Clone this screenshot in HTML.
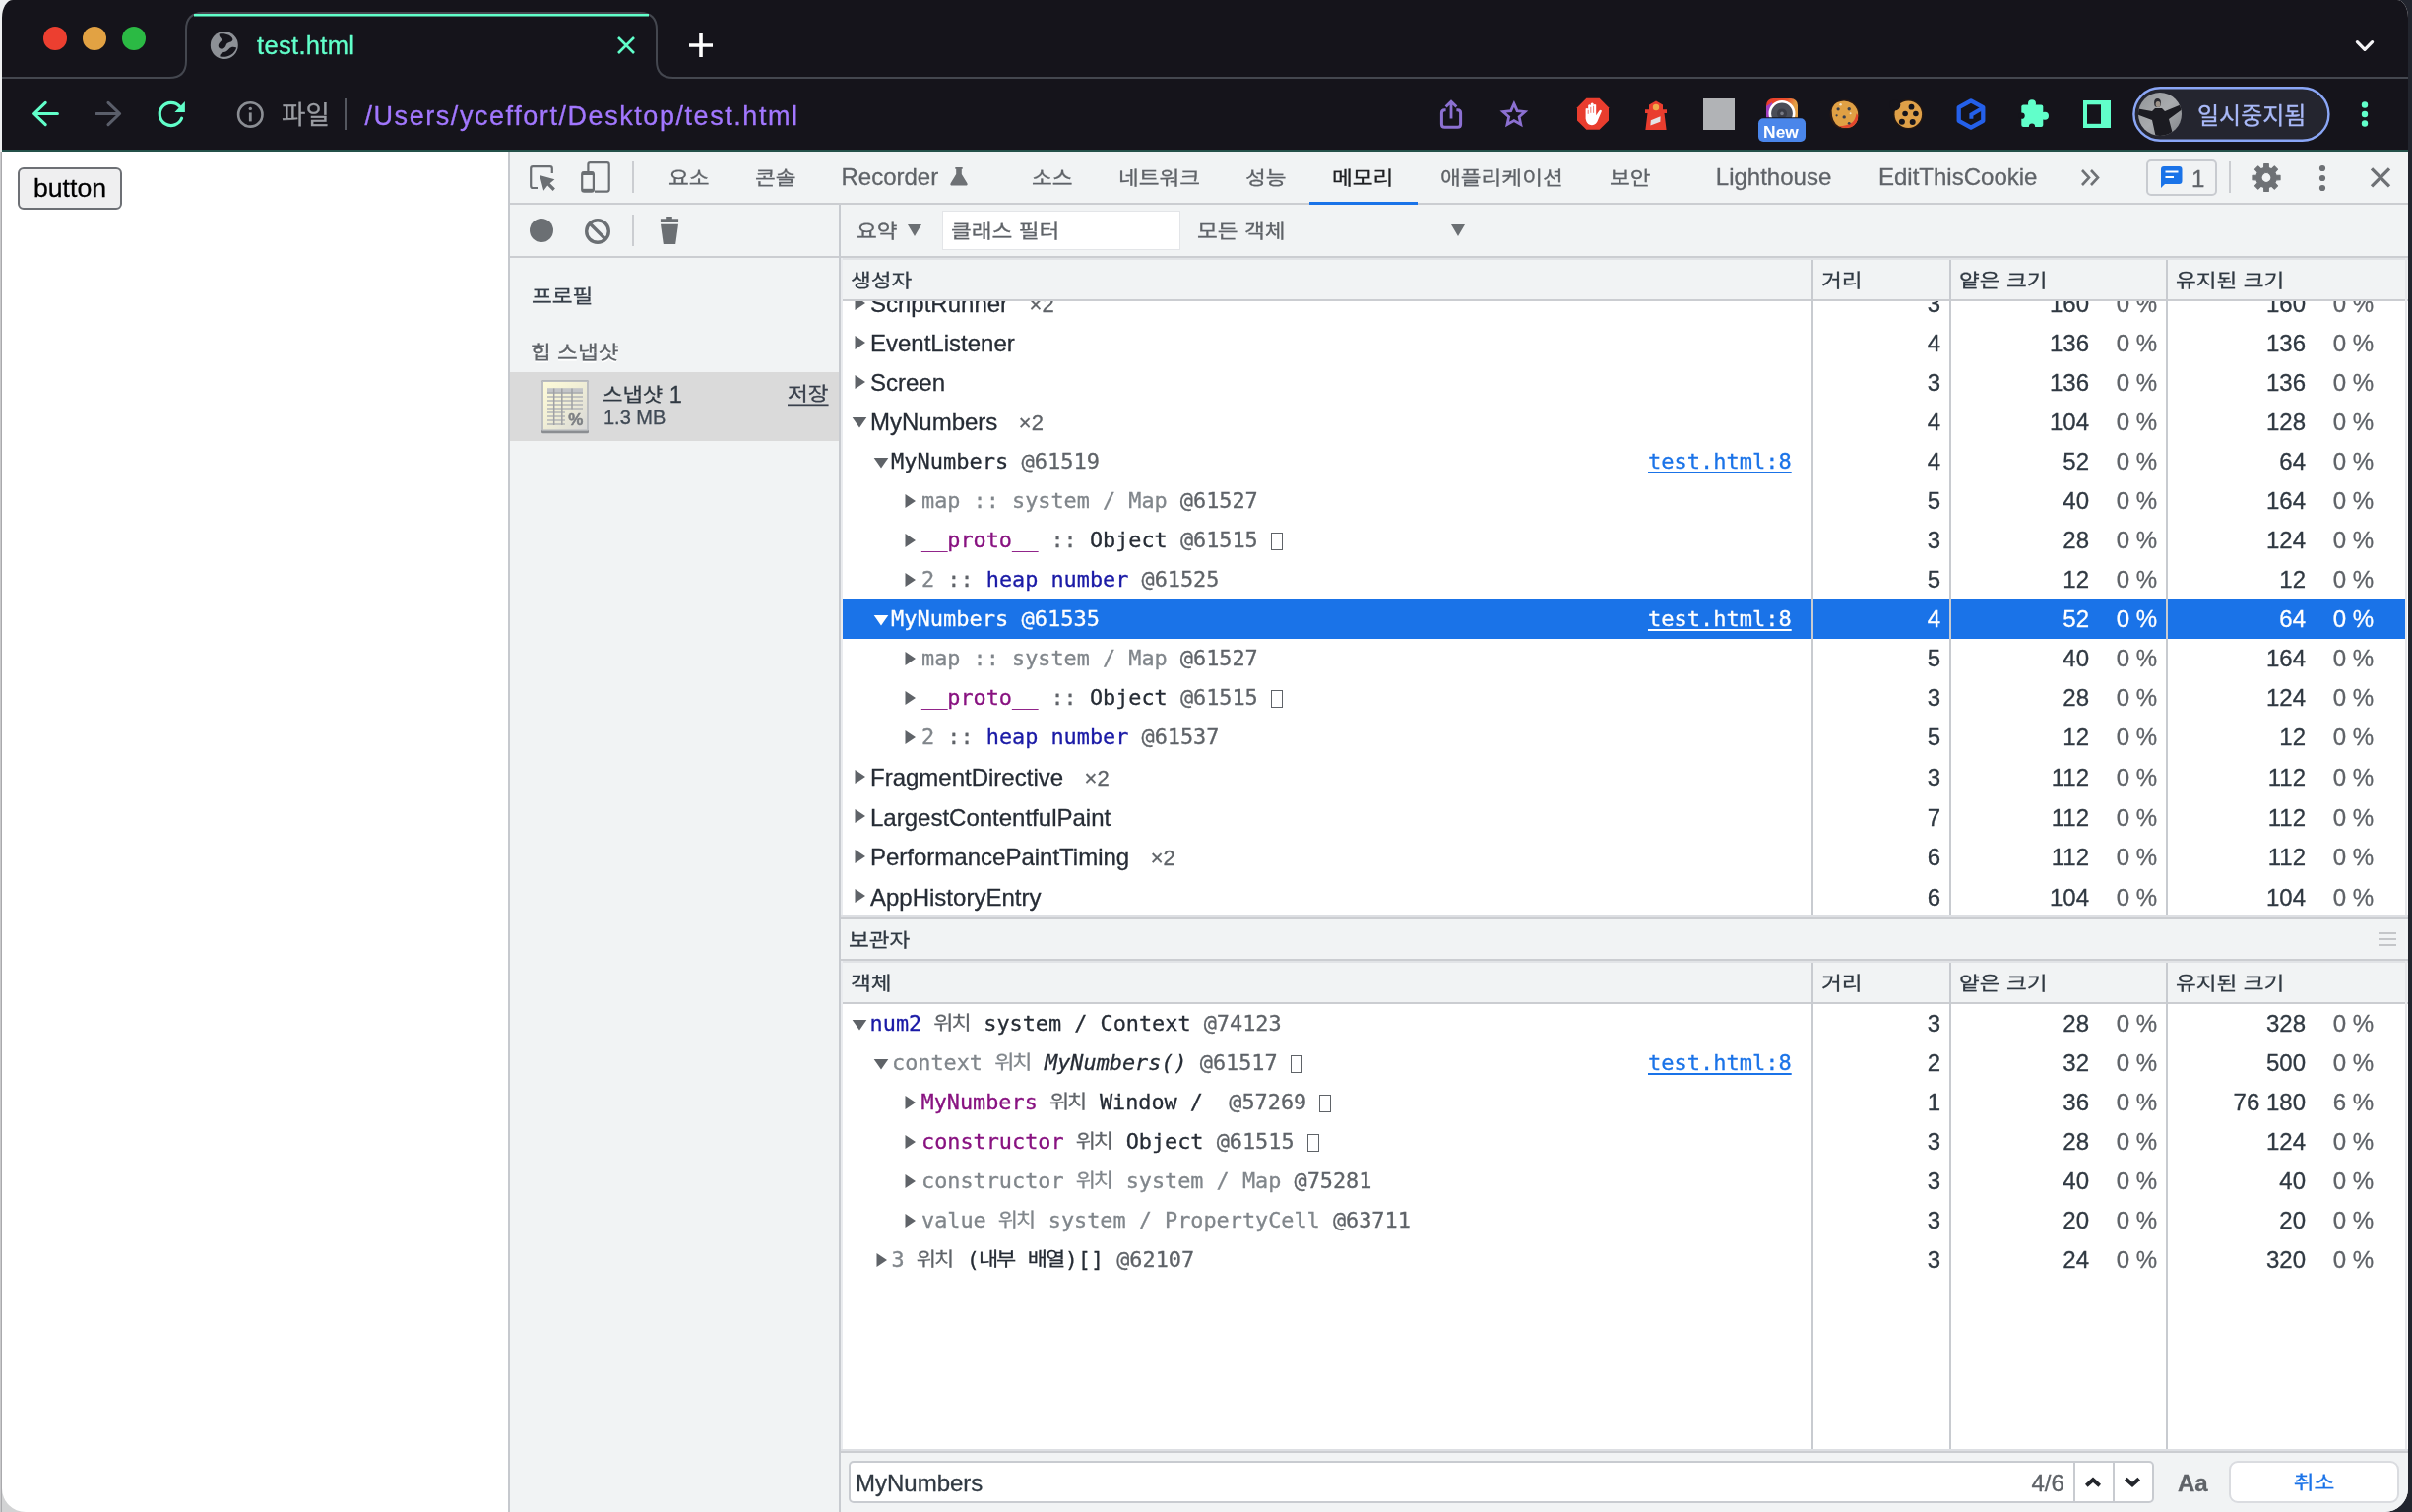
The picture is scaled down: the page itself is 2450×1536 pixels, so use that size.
<!DOCTYPE html>
<html lang="ko"><head><meta charset="utf-8"><title>test.html</title>
<style>
html,body{margin:0;padding:0}
body{width:2450px;height:1536px;position:relative;overflow:hidden;background:linear-gradient(to right,#c9c9cb 0,#c9c9cb 1px,#a9a9ac 1px,#a9a9ac 2px,#d2d3d4 2px,#d2d3d4 1200px,#22252e 1200px);font-family:"Liberation Sans","Noto Sans CJK KR",sans-serif;color:#303942;-webkit-font-smoothing:antialiased;-webkit-text-stroke:.3px}
*{box-sizing:border-box}
.abs{position:absolute}
#win{position:absolute;left:2px;top:0;width:2444px;height:1536px;border-radius:11px 11px 24px 24px / 18px 18px 24px 24px;overflow:hidden;background:#fff}
#chrome{position:absolute;left:0;top:0;width:2450px;height:152px;background:#15141b}
#tealline{position:absolute;left:0;top:152px;width:2450px;height:2px;background:#24514a}
.kr{font-family:"Noto Sans CJK KR","Liberation Sans",sans-serif}
.mono{font-family:"DejaVu Sans Mono","Liberation Mono","Noto Sans CJK KR",monospace}
svg{position:absolute;overflow:visible}
.t{position:absolute;white-space:pre;line-height:1}
/* devtools */
#dt{position:absolute;left:516px;top:154px;width:1930px;height:1382px;background:#f1f3f4}
.hl{position:absolute;height:2px;background:#cbcdd1}
.vl{position:absolute;width:2px;background:#cbcdd1}
.tab{position:absolute;top:154px;height:52px;line-height:52px;font-size:24px;color:#5f6368;white-space:pre}
.tab.kr{font-size:22.6px;transform:scaleY(.88)}
.sq{transform:scaleY(.88)}
.sqi{display:inline-block;transform:scaleY(.88)}
.row{position:absolute;left:856px;width:1588px;height:40px;line-height:40px;font-size:24px;white-space:pre}
.row .c{position:absolute;top:0;height:40px}
.row .num{position:absolute;top:0;text-align:right;width:200px;color:#303942}
.row .pct{position:absolute;top:0;text-align:right;width:100px;color:#5f6368}
.row .m{font-family:"DejaVu Sans Mono","Liberation Mono",monospace;font-size:21.84px;position:absolute;top:0}
.row .s{position:absolute;top:0}
.row .k{font-family:"Noto Sans CJK KR",sans-serif;font-size:22px;letter-spacing:-2.1px;margin-left:-1px;margin-right:1.5px;line-height:0;display:inline-block;transform:scaleY(.87)}
.row a{color:#1a73e8;text-decoration:underline;text-decoration-thickness:2px;text-underline-offset:3px}
.sel{background:#1a73e8}
.sel, .sel .num, .sel .pct, .sel a, .sel span{color:#fff !important}
.g{color:#80868b}.d{color:#5f6368}.b{color:#262c35}.p{color:#881280}.n{color:#1a1aa6}
.tofu{display:inline-block;width:12px;height:18px;border:1.6px solid #5f6368;vertical-align:-3px}
.hdr{position:absolute;transform:scaleY(.88);font-size:22.6px;line-height:40px;height:40px;color:#303942;font-family:"Noto Sans CJK KR",sans-serif;white-space:pre}
</style></head>
<body>
<div class="abs" style="left:0;top:0;width:40px;height:154px;background:#eeeff0"></div>
<div id="win">
<div class="abs" id="pg" style="left:-2px;top:0;width:2450px;height:1536px;will-change:transform">
<div id="chrome"></div><div id="tealline"></div>
<svg width="2450" height="156" style="left:0;top:0" viewBox="0 0 2450 156">
<path d="M0,79 H172 Q189,79 189,62 V30 Q189,13 206,13 H650 Q667,13 667,30 V62 Q667,79 684,79 H2450" fill="none" stroke="#44474f" stroke-width="2"/>
<path d="M197,15.3 H659" stroke="#61ffca" stroke-width="2.6" fill="none"/>
<circle cx="56" cy="39" r="12" fill="#ec3f30"/><circle cx="96" cy="39" r="12" fill="#e2a243"/><circle cx="136" cy="39" r="12" fill="#2bba44"/>
<g transform="translate(227.8,46)"><circle r="14" fill="#8d9096"/><path d="M-5,-11.5 C1,-12.5 8,-10 8.6,-6 C8.8,-2.6 3,-3.6 2,-0.6 C1.2,2.4 -1.6,4.6 -4.4,3.2 C-7.4,1.6 -5.8,-2.2 -3,-4.4 C-0.8,-6.4 -6.2,-8 -5,-11.5 Z" fill="#15141b"/><path d="M12.4,2.4 C10,9.6 3,12.8 -4.4,11.4 C-4.8,7.2 0.6,7.6 3,5.6 C5.4,3.6 6.4,0.4 12.4,2.4 Z" fill="#15141b"/></g>
<path d="M628,38 L644,54 M644,38 L628,54" stroke="#61ffca" stroke-width="2.6" fill="none"/>
<path d="M700,46 H724 M712,34 V58" stroke="#fff" stroke-width="3.6" fill="none"/>
<path d="M2394.4,42.6 L2402,50.4 L2409.6,42.6" stroke="#f4f4f6" stroke-width="3.2" fill="none" stroke-linejoin="round" stroke-linecap="round"/>
<path d="M58.4,115.5 H35.4 M46.2,104.4 L34.6,115.5 L46.2,126.6" stroke="#61ffca" stroke-width="3.1" fill="none" stroke-linecap="round" stroke-linejoin="round"/>
<path d="M97.8,115.5 H120.8 M110,104.4 L121.6,115.5 L110,126.6" stroke="#5a5e6a" stroke-width="3.1" fill="none" stroke-linecap="round" stroke-linejoin="round"/>
<g transform="translate(173.8,115.9)"><path d="M8.6,-7.8 A11.6,11.6 0 1 0 10.76,4.35" stroke="#61ffca" stroke-width="3.2" fill="none" stroke-linecap="round"/><path d="M14.1,-13 V-1.9 H3.7 Z" fill="#61ffca"/></g>
<g transform="translate(254.3,116.4)"><circle r="12.2" fill="none" stroke="#8b8e94" stroke-width="2.6"/><path d="M0,-2 V7" stroke="#8b8e94" stroke-width="2.8"/><circle cy="-6" r="1.7" fill="#8b8e94"/></g>
<path d="M351,100 V132" stroke="#54575f" stroke-width="2"/>
<g stroke="#8c70d2" stroke-width="3" fill="none"><path d="M1468.6,111.8 H1467.4 Q1464.4,111.8 1464.4,114.8 V126.3 Q1464.4,129.3 1467.4,129.3 H1480.6 Q1483.6,129.3 1483.6,126.3 V114.8 Q1483.6,111.8 1480.6,111.8 H1479.4"/><path d="M1474,120.6 V103.5 M1468.6,108.6 L1474,103.2 L1479.4,108.6" stroke-width="2.8"/></g>
<path d="M1537.90,105.40 L1541.13,112.65 L1549.03,113.48 L1543.13,118.80 L1544.78,126.57 L1537.90,122.60 L1531.02,126.57 L1532.67,118.80 L1526.77,113.48 L1534.67,112.65 Z" fill="none" stroke="#8c70d2" stroke-width="2.8" stroke-linejoin="miter"/>
<g transform="translate(1618,115.8)"><path d="M-6.6,-16 H6.6 L16,-6.6 V6.6 L6.6,16 H-6.6 L-16,6.6 V-6.6 Z" fill="#e93d2e"/><path d="M-7.4,5 V-5.2 Q-6.1,-6.6 -4.8,-5.2 V-8.8 Q-3.5,-10.2 -2.2,-8.8 V-10.6 Q-0.8,-12.2 0.6,-10.6 V-9.2 Q1.9,-10.6 3.2,-9.2 V1.5 L6.6,-3.6 Q8,-4.6 9,-3 L5.2,6 Q3.5,11.4 -1,11.4 Q-6.2,11.4 -7.4,5 Z" fill="#fff"/><path d="M-4.8,-4 V0 M-2.2,-7 V-1 M0.6,-8 V-1" stroke="#e93d2e" stroke-width="0.7"/></g>
<g transform="translate(1682,116)" fill="#e93d2e"><path d="M0,-13.4 L7,-9.4 V-4 H-7 V-9.4 Z"/><path d="M-11,-4.8 H11 V-1 H8.5 L10.6,16 H-10.6 L-8.5,-1 H-11 Z"/><circle cy="-7" r="3.2" fill="#f0a94a"/><path d="M-5.2,6.2 L4.6,2.2 L4.4,7.8 L-5.6,11.6 Z" fill="#e4e4e6"/></g>
<rect x="1730" y="100" width="32" height="32" fill="#b1b3b6"/>
<defs><linearGradient id="ig" x1="0" y1="0" x2="1" y2="0.6"><stop offset="0" stop-color="#e8392c"/><stop offset=".5" stop-color="#e8502c"/><stop offset=".75" stop-color="#e2a046"/><stop offset="1" stop-color="#e2a046"/></linearGradient><clipPath id="cam"><rect x="1794" y="100" width="32" height="21"/></clipPath></defs><g clip-path="url(#cam)"><rect x="1794" y="100" width="32" height="32" rx="7" fill="url(#ig)"/><path d="M1794,108 L1800,104 L1802,122 H1794 Z" fill="#a13fc0"/><circle cx="1810" cy="115.4" r="12.2" fill="#4a4d57" stroke="#fff" stroke-width="2.6"/><circle cx="1810" cy="115.4" r="5" fill="#3a3c46"/><circle cx="1810" cy="115.4" r="1.8" fill="#777a85"/></g>
<rect x="1785" y="119.2" width="50" height="25.8" rx="6" fill="#15141b"/><rect x="1786" y="120.2" width="48" height="23.8" rx="5" fill="#4a86ea"/>
<text x="1809" y="140" font-family="Liberation Sans, sans-serif" font-weight="bold" font-size="17.4" fill="#fff" text-anchor="middle">New</text>
<g transform="translate(1873.6,116.3)"><circle r="15" fill="#2a1a14"/><path d="M-13,-4 Q-12,-12 -4,-13.4 Q2,-15 8,-11 Q14,-6 13.6,1 Q14,9 7,12.6 Q0,15 -6,12 Q-13,8 -13,-4 Z" fill="#e0a044"/><path d="M13.6,1 Q14,9 7,12.6 Q0,15 -6,12 Q2,12 8,8 Q11,5 12,-1 Z" fill="#e2452c"/><circle cx="-6.5" cy="-5.5" r="1.6" fill="#3a3f4c"/><circle cx="4.6" cy="-5.6" r="1.7" fill="#3a3f4c"/><circle cx="-0.4" cy="2.6" r="1.7" fill="#3a3f4c"/><circle cx="-8" cy="1" r="1.1" fill="#3a3f4c"/><circle cx="4.6" cy="9" r="1.4" fill="#3a3f4c"/><circle cx="-4" cy="-10" r="1.2" fill="#f3e3c4"/><circle cx="6" cy="-1" r="1" fill="#f3e3c4"/></g>
<g transform="translate(1938.3,116.3)"><circle r="15.2" fill="#241812"/><circle r="13.8" fill="#dfa048"/><circle cx="-13.6" cy="-9.5" r="5.6" fill="#15141b"/><circle cx="3.2" cy="-7.6" r="2.9" fill="#15141b"/><circle cx="7.6" cy="-0.8" r="2.8" fill="#15141b"/><circle cx="-3.2" cy="-0.8" r="2.8" fill="#15141b"/><circle cx="-6.4" cy="7.4" r="3" fill="#15141b"/><circle cx="4.4" cy="7.8" r="3" fill="#15141b"/></g>
<g transform="translate(2002,116)" fill="none" stroke="#2460ea" stroke-width="4.3"><path d="M0,-13.7 L12.3,-6.8 V6.8 L0,13.7 L-12.3,6.8 V-6.8 Z" stroke-linejoin="round"/><path d="M12.3,-6.4 L0.4,0.4 V4.8" stroke-width="4"/></g>
<g fill="#61ffca"><rect x="2053.3" y="106.6" width="22" height="22.4" rx="2"/><circle cx="2064" cy="105.2" r="4"/><circle cx="2077" cy="117.7" r="4"/></g><circle cx="2053.6" cy="117.7" r="3.1" fill="#15141b"/><circle cx="2064" cy="128.6" r="3.1" fill="#15141b"/>
<rect x="2116" y="102" width="28" height="28" fill="#61ffca"/><rect x="2120" y="106.3" width="14" height="19.5" fill="#15141b"/>
<rect x="2167.4" y="89.2" width="198" height="53.6" rx="26.8" fill="#24252f" stroke="#8aa6f6" stroke-width="2.4"/>
<defs><clipPath id="av"><circle cx="2194" cy="116" r="22"/></clipPath><linearGradient id="avg" x1="0" y1="0" x2="1" y2="1"><stop offset="0" stop-color="#8f9296"/><stop offset=".5" stop-color="#a9abae"/><stop offset="1" stop-color="#7e8186"/></linearGradient></defs><g clip-path="url(#av)"><rect x="2170" y="92" width="48" height="48" fill="url(#avg)"/><path d="M2170,110 L2186,113 L2189,110 H2196 L2199,113 L2216,106 L2218,110 L2203,121 L2208,140 H2190 L2186,122 L2170,116 Z" fill="#1b1b21"/><ellipse cx="2191.5" cy="104.5" rx="3.4" ry="4.6" fill="#2a2a30"/><ellipse cx="2192" cy="106" rx="2.4" ry="3" fill="#9c9288"/></g>
<circle cx="2402" cy="106.5" r="3.2" fill="#61ffca"/><circle cx="2402" cy="116" r="3.2" fill="#61ffca"/><circle cx="2402" cy="125.5" r="3.2" fill="#61ffca"/>
</svg>
<div class="t" style="left:261px;top:32px;font-size:25.5px;letter-spacing:.33px;color:#61ffca;line-height:28px;-webkit-text-stroke:.35px #61ffca">test.html</div>
<div class="t kr" style="left:286px;top:95.5px;font-size:26.5px;color:#9a9da3;line-height:38px">파일</div>
<div class="t" style="left:370.5px;top:99.5px;font-size:27px;letter-spacing:1.56px;color:#a277ff;line-height:36px">/Users/yceffort/Desktop/test.html</div>
<div class="t kr" style="left:2232px;top:97px;font-size:24px;color:#a9b9f8;line-height:38px">일시중지됨</div>
<!-- page content -->
<div class="abs" style="left:18px;top:170px;width:106px;height:42.5px;border:2px solid #6d7075;border-radius:6px;background:#efeff0;font-size:26.67px;line-height:38px;text-align:center;color:#000">button</div>
<div id="dt"></div>
<div class="vl" style="left:516px;top:154px;height:1382px;background:#c6c9ce"></div>
<div class="hl" style="left:518px;top:206px;width:1928px"></div>
<div class="hl" style="left:518px;top:260px;width:1928px"></div>
<div class="vl" style="left:852px;top:208px;height:1328px;background:#c8cbd0"></div>
<div class="tab kr" style="left:679px">요소</div>
<div class="tab kr" style="left:767px">콘솔</div>
<div class="tab" style="left:854.5px">Recorder</div>
<div class="tab kr" style="left:1048px">소스</div>
<div class="tab kr" style="left:1136px">네트워크</div>
<div class="tab kr" style="left:1265px">성능</div>
<div class="tab kr" style="left:1353px;color:#202124">메모리</div>
<div class="tab kr" style="left:1463px">애플리케이션</div>
<div class="tab kr" style="left:1635px">보안</div>
<div class="tab" style="left:1742.8px">Lighthouse</div>
<div class="tab" style="left:1908px">EditThisCookie</div>
<div class="abs" style="left:1330px;top:204.5px;width:110px;height:3.5px;background:#1a73e8"></div>
<svg width="1934" height="110" style="left:516px;top:154px" viewBox="516 154 1934 110">
<g fill="none" stroke="#6b6f73" stroke-width="2.2" stroke-linejoin="round"><path d="M546,191 H541.2 Q539.2,191 539.2,189 V171.2 Q539.2,169.2 541.2,169.2 H558.8 Q560.8,169.2 560.8,171.2 V176"/></g><path d="M548.1,178.1 L563.4,182.3 L558.6,186.2 L563.9,191.6 L561.6,193.9 L556.2,188.6 L552.2,193.8 Z" fill="#6b6f73"/>
<g fill="none" stroke="#6b6f73" stroke-width="2.2"><path d="M597.4,174 V167.2 Q597.4,165.2 599.4,165.2 H616.7 Q618.7,165.2 618.7,167.2 V192.6 Q618.7,194.6 616.7,194.6 H604"/><rect x="591.2" y="175.1" width="11.7" height="19.5" rx="2.2"/></g><rect x="591.2" y="174.6" width="11.7" height="3.4" fill="#6b6f73"/><rect x="591.2" y="191.8" width="11.7" height="3" fill="#6b6f73"/>
<path d="M643,164 V196" stroke="#cbcdd1" stroke-width="2"/>
<path d="M970.3,170 H977.7 V171.8 H976.8 V177 L982.4,186.2 Q983.4,188.6 980.8,188.6 H967.2 Q964.6,188.6 965.6,186.2 L971.2,177 V171.8 H970.3 Z" fill="#6e7175"/>
<path d="M2115,173 L2122,180.5 L2115,188 M2124,173 L2131,180.5 L2124,188" fill="none" stroke="#6e7175" stroke-width="2.6"/>
<rect x="2181" y="163" width="70" height="35" rx="4" fill="none" stroke="#c8cbd0" stroke-width="2"/>
<path d="M2198,169 H2213.5 Q2216.5,169 2216.5,172 V184 Q2216.5,187 2213.5,187 H2199 L2195,191 V172 Q2195,169 2198,169 Z" fill="#1a73e8"/><path d="M2199.5,174.5 H2212.5 M2199.5,180 H2208" stroke="#fff" stroke-width="2.2"/>
<path d="M2265,164 V196" stroke="#cbcdd1" stroke-width="2"/>
<g transform="translate(2302,180.5)"><path d="M-2.26,-14.02 L2.26,-14.02 L2.35,-10.03 L5.43,-8.75 L8.31,-11.51 L11.51,-8.31 L8.75,-5.43 L10.03,-2.35 L14.02,-2.26 L14.02,2.26 L10.03,2.35 L8.75,5.43 L11.51,8.31 L8.31,11.51 L5.43,8.75 L2.35,10.03 L2.26,14.02 L-2.26,14.02 L-2.35,10.03 L-5.43,8.75 L-8.31,11.51 L-11.51,8.31 L-8.75,5.43 L-10.03,2.35 L-14.02,2.26 L-14.02,-2.26 L-10.03,-2.35 L-8.75,-5.43 L-11.51,-8.31 L-8.31,-11.51 L-5.43,-8.75 L-2.35,-10.03 Z M5,0 A5,5 0 1 0 -5,0 A5,5 0 1 0 5,0 Z" fill="#6e7175" fill-rule="evenodd" stroke="#6e7175" stroke-width="1.2" stroke-linejoin="round"/></g>
<circle cx="2359" cy="171" r="3.1" fill="#6e7175"/><circle cx="2359" cy="181" r="3.1" fill="#6e7175"/><circle cx="2359" cy="191" r="3.1" fill="#6e7175"/>
<path d="M2409,171.4 L2427,189.4 M2427,171.4 L2409,189.4" stroke="#6e7175" stroke-width="3.3"/>
<circle cx="550" cy="234" r="12" fill="#6b6f73"/>
<g transform="translate(607,235)"><circle r="11.3" fill="none" stroke="#6b6f73" stroke-width="3.4"/><path d="M-8,-8 L8,8" stroke="#6b6f73" stroke-width="3.4"/></g>
<path d="M643,218 V250" stroke="#cbcdd1" stroke-width="2"/>
<g transform="translate(680,234)" fill="#6b6f73"><path d="M-9.1,-11.8 H-2.8 V-13.9 H2.8 V-11.8 H9.1 V-8.1 H-9.1 Z"/><path d="M-9,-6.2 H9 L6.2,13.9 H-6.2 Z"/></g>
<path d="M922,228 H936 L929,240 Z" fill="#6b6f73"/>
<path d="M1474,228 H1488 L1481,240 Z" fill="#6b6f73"/>
</svg>
<div class="t" style="left:2226px;top:168px;font-size:24px;line-height:28px;color:#5f6368">1</div>
<div class="tab kr" style="left:870px;top:208px;color:#5f6368">요약</div>
<div class="abs" style="left:957px;top:214px;width:242px;height:40px;background:#fff;border:1.5px solid #e3e5e8"></div>
<div class="tab kr" style="left:966px;top:208px;color:#5f6368">클래스 필터</div>
<div class="tab kr" style="left:1216px;top:208px;color:#5f6368">모든 객체</div>
<div class="t kr sq" style="left:540px;top:280px;font-size:22.6px;line-height:40px;color:#363e49">프로필</div>
<div class="t kr sq" style="left:539px;top:337px;font-size:22.6px;line-height:40px;color:#5f6368;text-shadow:0 2px 0 #fff">힙 스냅샷</div>
<div class="abs" style="left:518px;top:378px;width:334px;height:70px;background:#dadada"></div>
<svg width="52" height="60" style="left:548px;top:384px" viewBox="548 384 52 60"><defs><linearGradient id="sg" x1="0" y1="0" x2="1" y2="1"><stop offset="0" stop-color="#fdfad8"/><stop offset=".45" stop-color="#f1efd6"/><stop offset="1" stop-color="#d8d8d8"/></linearGradient></defs><rect x="550" y="386.2" width="48" height="54" rx="1.5" fill="#8b8e92"/><rect x="550" y="386.2" width="48" height="51.6" rx="1.5" fill="#bcbec1"/><rect x="552" y="388" width="44" height="48.4" fill="url(#sg)"/><rect x="556" y="394.2" width="36" height="5.2" fill="#c3c5c8"/><path d="M556,399 H592" stroke="#a9abaf" stroke-width="1.4"/><g stroke="#b3b5b8" stroke-width="1.4"><path d="M556,403 H592 M556,407 H592 M556,411 H592 M556,415 H592 M556,419 H574 M556,423 H574 M556,427 H574 M556,431 H574"/></g><g stroke="#9fa1a5" stroke-width="1.5"><path d="M562.7,394.5 V432 M570.8,394.5 V432 M581,394.5 V415.5"/></g><text x="584.8" y="432" font-family="Liberation Sans, sans-serif" font-weight="bold" font-size="17" fill="#7c7f83" stroke="#7c7f83" stroke-width=".5" text-anchor="middle">%</text></svg>
<div class="t" style="left:612px;top:378.5px;font-size:23.5px;line-height:40px;color:#303942"><span class="kr sqi" style="font-size:22.2px">스냅샷</span> 1</div>
<div class="t" style="left:613px;top:409px;font-size:20px;line-height:30px;color:#404a55">1.3 MB</div>
<div class="t kr sq" style="left:800px;top:378.5px;font-size:22.6px;line-height:40px;color:#3a414d;text-decoration:underline;text-decoration-thickness:2.2px;text-underline-offset:3.6px">저장</div>
<div class="abs" style="left:854px;top:262px;width:1592px;height:668px;background:#fff"></div>
<div class="abs" style="left:854px;top:262px;width:1592px;height:42px;background:#f1f3f4;border-top:2px solid #e1e3e6"></div>
<div class="hl" style="left:854px;top:304px;width:1592px"></div>
<div class="hdr" style="left:864px;top:264px">생성자</div>
<div class="hdr" style="left:1850px;top:264px">거리</div>
<div class="hdr" style="left:1990px;top:264px">얕은 크기</div>
<div class="hdr" style="left:2210px;top:264px">유지된 크기</div>
<div class="abs" style="left:0;top:306px;width:2450px;height:624px;overflow:hidden"><div class="abs" style="left:0;top:-306px;width:2450px;height:1536px">
<div class="row" style="top:289px"><svg width="12" height="16" style="left:11.5px;top:10.6px" viewBox="0 0 12 16"><path d="M0.5,1 V15 L11,8 Z" fill="#5f6368"/></svg><span class="s" style="left:28px"><span class="b">ScriptRunner</span><span class="d" style="font-size:22px;margin-left:21.5px">×2</span></span><span class="num" style="left:915px">3</span><span class="num" style="left:1066px">160</span><span class="pct" style="left:1235px">0 %</span><span class="num" style="left:1286px">160</span><span class="pct" style="left:1455px">0 %</span></div>
<div class="row" style="top:329px"><svg width="12" height="16" style="left:11.5px;top:10.6px" viewBox="0 0 12 16"><path d="M0.5,1 V15 L11,8 Z" fill="#5f6368"/></svg><span class="s" style="left:28px"><span class="b">EventListener</span></span><span class="num" style="left:915px">4</span><span class="num" style="left:1066px">136</span><span class="pct" style="left:1235px">0 %</span><span class="num" style="left:1286px">136</span><span class="pct" style="left:1455px">0 %</span></div>
<div class="row" style="top:369px"><svg width="12" height="16" style="left:11.5px;top:10.6px" viewBox="0 0 12 16"><path d="M0.5,1 V15 L11,8 Z" fill="#5f6368"/></svg><span class="s" style="left:28px"><span class="b">Screen</span></span><span class="num" style="left:915px">3</span><span class="num" style="left:1066px">136</span><span class="pct" style="left:1235px">0 %</span><span class="num" style="left:1286px">136</span><span class="pct" style="left:1455px">0 %</span></div>
<div class="row" style="top:409px"><svg width="16" height="12" style="left:9px;top:14.3px" viewBox="0 0 16 12"><path d="M0.7,1 H15.3 L8,11.5 Z" fill="#5f6368"/></svg><span class="s" style="left:28px"><span class="b">MyNumbers</span><span class="d" style="font-size:22px;margin-left:21.5px">×2</span></span><span class="num" style="left:915px">4</span><span class="num" style="left:1066px">104</span><span class="pct" style="left:1235px">0 %</span><span class="num" style="left:1286px">128</span><span class="pct" style="left:1455px">0 %</span></div>
<div class="row" style="top:449px"><svg width="16" height="12" style="left:31px;top:14.8px" viewBox="0 0 16 12"><path d="M0.7,1 H15.3 L8,11.5 Z" fill="#5f6368"/></svg><span class="m" style="left:49px"><span style="font-size:22px"><span class="b">MyNumbers</span> <span class="d">@61519</span></span></span><a class="m" style="left:818px;font-size:22px">test.html:8</a><span class="num" style="left:915px">4</span><span class="num" style="left:1066px">52</span><span class="pct" style="left:1235px">0 %</span><span class="num" style="left:1286px">64</span><span class="pct" style="left:1455px">0 %</span></div>
<div class="row" style="top:489px"><svg width="12" height="16" style="left:63.3px;top:12px" viewBox="0 0 12 16"><path d="M0.5,1 V15 L11,8 Z" fill="#5f6368"/></svg><span class="m" style="left:80px"><span class="g">map :: system / Map</span> <span class="d">@61527</span></span><span class="num" style="left:915px">5</span><span class="num" style="left:1066px">40</span><span class="pct" style="left:1235px">0 %</span><span class="num" style="left:1286px">164</span><span class="pct" style="left:1455px">0 %</span></div>
<div class="row" style="top:529px"><svg width="12" height="16" style="left:63.3px;top:12px" viewBox="0 0 12 16"><path d="M0.5,1 V15 L11,8 Z" fill="#5f6368"/></svg><span class="m" style="left:80px"><span class="p">__proto__</span> <span class="d">::</span> <span class="b">Object</span> <span class="d">@61515</span> <span class="tofu"></span></span><span class="num" style="left:915px">3</span><span class="num" style="left:1066px">28</span><span class="pct" style="left:1235px">0 %</span><span class="num" style="left:1286px">124</span><span class="pct" style="left:1455px">0 %</span></div>
<div class="row" style="top:569px"><svg width="12" height="16" style="left:63.3px;top:12px" viewBox="0 0 12 16"><path d="M0.5,1 V15 L11,8 Z" fill="#5f6368"/></svg><span class="m" style="left:80px"><span class="g">2</span> <span class="d">::</span> <span class="n">heap number</span> <span class="d">@61525</span></span><span class="num" style="left:915px">5</span><span class="num" style="left:1066px">12</span><span class="pct" style="left:1235px">0 %</span><span class="num" style="left:1286px">12</span><span class="pct" style="left:1455px">0 %</span></div>
<div class="row sel" style="top:609px"><svg width="16" height="12" style="left:31px;top:14.8px" viewBox="0 0 16 12"><path d="M0.7,1 H15.3 L8,11.5 Z" fill="#fff"/></svg><span class="m" style="left:49px"><span style="font-size:22px"><span class="b">MyNumbers</span> <span class="d">@61535</span></span></span><a class="m" style="left:818px;font-size:22px">test.html:8</a><span class="num" style="left:915px">4</span><span class="num" style="left:1066px">52</span><span class="pct" style="left:1235px">0 %</span><span class="num" style="left:1286px">64</span><span class="pct" style="left:1455px">0 %</span></div>
<div class="row" style="top:649px"><svg width="12" height="16" style="left:63.3px;top:12px" viewBox="0 0 12 16"><path d="M0.5,1 V15 L11,8 Z" fill="#5f6368"/></svg><span class="m" style="left:80px"><span class="g">map :: system / Map</span> <span class="d">@61527</span></span><span class="num" style="left:915px">5</span><span class="num" style="left:1066px">40</span><span class="pct" style="left:1235px">0 %</span><span class="num" style="left:1286px">164</span><span class="pct" style="left:1455px">0 %</span></div>
<div class="row" style="top:689px"><svg width="12" height="16" style="left:63.3px;top:12px" viewBox="0 0 12 16"><path d="M0.5,1 V15 L11,8 Z" fill="#5f6368"/></svg><span class="m" style="left:80px"><span class="p">__proto__</span> <span class="d">::</span> <span class="b">Object</span> <span class="d">@61515</span> <span class="tofu"></span></span><span class="num" style="left:915px">3</span><span class="num" style="left:1066px">28</span><span class="pct" style="left:1235px">0 %</span><span class="num" style="left:1286px">124</span><span class="pct" style="left:1455px">0 %</span></div>
<div class="row" style="top:729px"><svg width="12" height="16" style="left:63.3px;top:12px" viewBox="0 0 12 16"><path d="M0.5,1 V15 L11,8 Z" fill="#5f6368"/></svg><span class="m" style="left:80px"><span class="g">2</span> <span class="d">::</span> <span class="n">heap number</span> <span class="d">@61537</span></span><span class="num" style="left:915px">5</span><span class="num" style="left:1066px">12</span><span class="pct" style="left:1235px">0 %</span><span class="num" style="left:1286px">12</span><span class="pct" style="left:1455px">0 %</span></div>
<div class="row" style="top:770px"><svg width="12" height="16" style="left:11.5px;top:10.6px" viewBox="0 0 12 16"><path d="M0.5,1 V15 L11,8 Z" fill="#5f6368"/></svg><span class="s" style="left:28px"><span class="b">FragmentDirective</span><span class="d" style="font-size:22px;margin-left:21.5px">×2</span></span><span class="num" style="left:915px">3</span><span class="num" style="left:1066px">112</span><span class="pct" style="left:1235px">0 %</span><span class="num" style="left:1286px">112</span><span class="pct" style="left:1455px">0 %</span></div>
<div class="row" style="top:810.5px"><svg width="12" height="16" style="left:11.5px;top:10.6px" viewBox="0 0 12 16"><path d="M0.5,1 V15 L11,8 Z" fill="#5f6368"/></svg><span class="s" style="left:28px"><span class="b">LargestContentfulPaint</span></span><span class="num" style="left:915px">7</span><span class="num" style="left:1066px">112</span><span class="pct" style="left:1235px">0 %</span><span class="num" style="left:1286px">112</span><span class="pct" style="left:1455px">0 %</span></div>
<div class="row" style="top:851px"><svg width="12" height="16" style="left:11.5px;top:10.6px" viewBox="0 0 12 16"><path d="M0.5,1 V15 L11,8 Z" fill="#5f6368"/></svg><span class="s" style="left:28px"><span class="b">PerformancePaintTiming</span><span class="d" style="font-size:22px;margin-left:21.5px">×2</span></span><span class="num" style="left:915px">6</span><span class="num" style="left:1066px">112</span><span class="pct" style="left:1235px">0 %</span><span class="num" style="left:1286px">112</span><span class="pct" style="left:1455px">0 %</span></div>
<div class="row" style="top:891.5px"><svg width="12" height="16" style="left:11.5px;top:10.6px" viewBox="0 0 12 16"><path d="M0.5,1 V15 L11,8 Z" fill="#5f6368"/></svg><span class="s" style="left:28px"><span class="b">AppHistoryEntry</span></span><span class="num" style="left:915px">6</span><span class="num" style="left:1066px">104</span><span class="pct" style="left:1235px">0 %</span><span class="num" style="left:1286px">104</span><span class="pct" style="left:1455px">0 %</span></div>
</div></div>
<div class="abs" style="left:854px;top:930px;width:1592px;height:46px;background:#f1f3f4;border-top:2px solid #dddfe3"></div>
<div class="hl" style="left:854px;top:932px;width:1592px"></div>
<div class="hl" style="left:854px;top:974px;width:1592px"></div>
<div class="hdr" style="left:862px;top:934px">보관자</div>
<div class="abs" style="left:2416px;top:947px;width:18px;height:13.6px;border-top:2px solid #c4c6c9;border-bottom:2px solid #c4c6c9"><div style="margin-top:3.8px;height:2px;background:#c4c6c9"></div></div>
<div class="abs" style="left:854px;top:976px;width:1592px;height:496px;background:#fff"></div>
<div class="abs" style="left:854px;top:976px;width:1592px;height:42px;background:#f1f3f4;border-top:2px solid #e1e3e6"></div>
<div class="hl" style="left:854px;top:1018px;width:1592px"></div>
<div class="hdr" style="left:864px;top:978px">객체</div>
<div class="hdr" style="left:1850px;top:978px">거리</div>
<div class="hdr" style="left:1990px;top:978px">얕은 크기</div>
<div class="hdr" style="left:2210px;top:978px">유지된 크기</div>
<div class="row" style="top:1020px"><svg width="16" height="12" style="left:9px;top:14.8px" viewBox="0 0 16 12"><path d="M0.7,1 H15.3 L8,11.5 Z" fill="#5f6368"/></svg><span class="m" style="left:27.6px"><span class="n">num2</span> <span class="d"><span class="k">위치</span></span> <span class="b">system / Context</span> <span class="d">@74123</span></span><span class="num" style="left:915px">3</span><span class="num" style="left:1066px">28</span><span class="pct" style="left:1235px">0 %</span><span class="num" style="left:1286px">328</span><span class="pct" style="left:1455px">0 %</span></div>
<div class="row" style="top:1060px"><svg width="16" height="12" style="left:31px;top:14.8px" viewBox="0 0 16 12"><path d="M0.7,1 H15.3 L8,11.5 Z" fill="#5f6368"/></svg><span class="m" style="left:50px"><span class="g">context <span class="k">위치</span></span> <span class="b" style="font-style:italic">MyNumbers()</span> <span class="d">@61517</span> <span class="tofu"></span></span><a class="m" style="left:818px;font-size:22px">test.html:8</a><span class="num" style="left:915px">2</span><span class="num" style="left:1066px">32</span><span class="pct" style="left:1235px">0 %</span><span class="num" style="left:1286px">500</span><span class="pct" style="left:1455px">0 %</span></div>
<div class="row" style="top:1100px"><svg width="12" height="16" style="left:63.3px;top:12px" viewBox="0 0 12 16"><path d="M0.5,1 V15 L11,8 Z" fill="#5f6368"/></svg><span class="m" style="left:79.5px"><span class="p">MyNumbers</span> <span class="d"><span class="k">위치</span></span> <span class="b">Window / </span> <span class="d">@57269</span> <span class="tofu"></span></span><span class="num" style="left:915px">1</span><span class="num" style="left:1066px">36</span><span class="pct" style="left:1235px">0 %</span><span class="num" style="left:1286px">76 180</span><span class="pct" style="left:1455px">6 %</span></div>
<div class="row" style="top:1140px"><svg width="12" height="16" style="left:63.3px;top:12px" viewBox="0 0 12 16"><path d="M0.5,1 V15 L11,8 Z" fill="#5f6368"/></svg><span class="m" style="left:80px"><span class="p">constructor</span> <span class="d"><span class="k">위치</span></span> <span class="b">Object</span> <span class="d">@61515</span> <span class="tofu"></span></span><span class="num" style="left:915px">3</span><span class="num" style="left:1066px">28</span><span class="pct" style="left:1235px">0 %</span><span class="num" style="left:1286px">124</span><span class="pct" style="left:1455px">0 %</span></div>
<div class="row" style="top:1180px"><svg width="12" height="16" style="left:63.3px;top:12px" viewBox="0 0 12 16"><path d="M0.5,1 V15 L11,8 Z" fill="#5f6368"/></svg><span class="m" style="left:80px"><span class="g">constructor <span class="k">위치</span> system / Map</span> <span class="d">@75281</span></span><span class="num" style="left:915px">3</span><span class="num" style="left:1066px">40</span><span class="pct" style="left:1235px">0 %</span><span class="num" style="left:1286px">40</span><span class="pct" style="left:1455px">0 %</span></div>
<div class="row" style="top:1220px"><svg width="12" height="16" style="left:63.3px;top:12px" viewBox="0 0 12 16"><path d="M0.5,1 V15 L11,8 Z" fill="#5f6368"/></svg><span class="m" style="left:80px"><span class="g">value <span class="k">위치</span> system / PropertyCell</span> <span class="d">@63711</span></span><span class="num" style="left:915px">3</span><span class="num" style="left:1066px">20</span><span class="pct" style="left:1235px">0 %</span><span class="num" style="left:1286px">20</span><span class="pct" style="left:1455px">0 %</span></div>
<div class="row" style="top:1260px"><svg width="12" height="16" style="left:33.5px;top:12px" viewBox="0 0 12 16"><path d="M0.5,1 V15 L11,8 Z" fill="#5f6368"/></svg><span class="m" style="left:49.5px"><span class="g">3</span> <span class="d"><span class="k">위치</span></span> <span class="b">(<span class="k">내부</span> <span class="k">배열</span>)[]</span> <span class="d">@62107</span></span><span class="num" style="left:915px">3</span><span class="num" style="left:1066px">24</span><span class="pct" style="left:1235px">0 %</span><span class="num" style="left:1286px">320</span><span class="pct" style="left:1455px">0 %</span></div>
<div class="vl" style="left:1840px;top:264px;height:666px;background:#c8cbd0"></div>
<div class="vl" style="left:1840px;top:978px;height:494px;background:#c8cbd0"></div>
<div class="vl" style="left:1980px;top:264px;height:666px;background:#c8cbd0"></div>
<div class="vl" style="left:1980px;top:978px;height:494px;background:#c8cbd0"></div>
<div class="vl" style="left:2200px;top:264px;height:666px;background:#c8cbd0"></div>
<div class="vl" style="left:2200px;top:978px;height:494px;background:#c8cbd0"></div>
<div class="vl" style="left:854px;top:262px;height:668px;background:#eaecef"></div>
<div class="vl" style="left:854px;top:976px;height:496px;background:#eaecef"></div>
<div class="vl" style="left:2443px;top:262px;height:668px;background:#e6e7ea;width:1.5px"></div>
<div class="vl" style="left:2443px;top:976px;height:496px;background:#e6e7ea;width:1.5px"></div>
<div class="abs" style="left:854px;top:1472px;width:1592px;height:64px;background:#f1f3f4;border-top:2px solid #dddfe3"></div>
<div class="hl" style="left:854px;top:1474px;width:1592px"></div>
<div class="abs" style="left:862px;top:1484px;width:1326px;height:43px;background:#fff;border:2px solid #c8cbd0;border-radius:5px"></div>
<div class="t" style="left:869px;top:1487px;font-size:24px;line-height:40px;color:#303942">MyNumbers</div>
<div class="t" style="left:2063.5px;top:1487px;font-size:24px;line-height:40px;color:#5f6368">4/6</div>
<div class="vl" style="left:2106px;top:1486px;height:39px;background:#c8cbd0"></div>
<div class="vl" style="left:2146px;top:1486px;height:39px;background:#c8cbd0"></div>
<svg width="100" height="40" style="left:2106px;top:1486px" viewBox="2106 1486 100 40"><path d="M2119.3,1509.3 L2126,1503.2 L2132.7,1509.3" fill="none" stroke="#23262c" stroke-width="3.9"/><path d="M2159.3,1502.2 L2166,1508.3 L2172.7,1502.2" fill="none" stroke="#23262c" stroke-width="3.9"/></svg>
<div class="t" style="left:2212px;top:1487px;font-size:24px;font-weight:bold;line-height:40px;color:#5f6368">Aa</div>
<div class="abs kr" style="left:2264px;top:1484px;width:173px;height:43px;background:#fff;border:2px solid #dadce0;border-radius:9px;text-align:center;font-size:22.6px;line-height:37px;color:#1a73e8"><span class="sqi">취소</span></div>
</div></div>
</body></html>
